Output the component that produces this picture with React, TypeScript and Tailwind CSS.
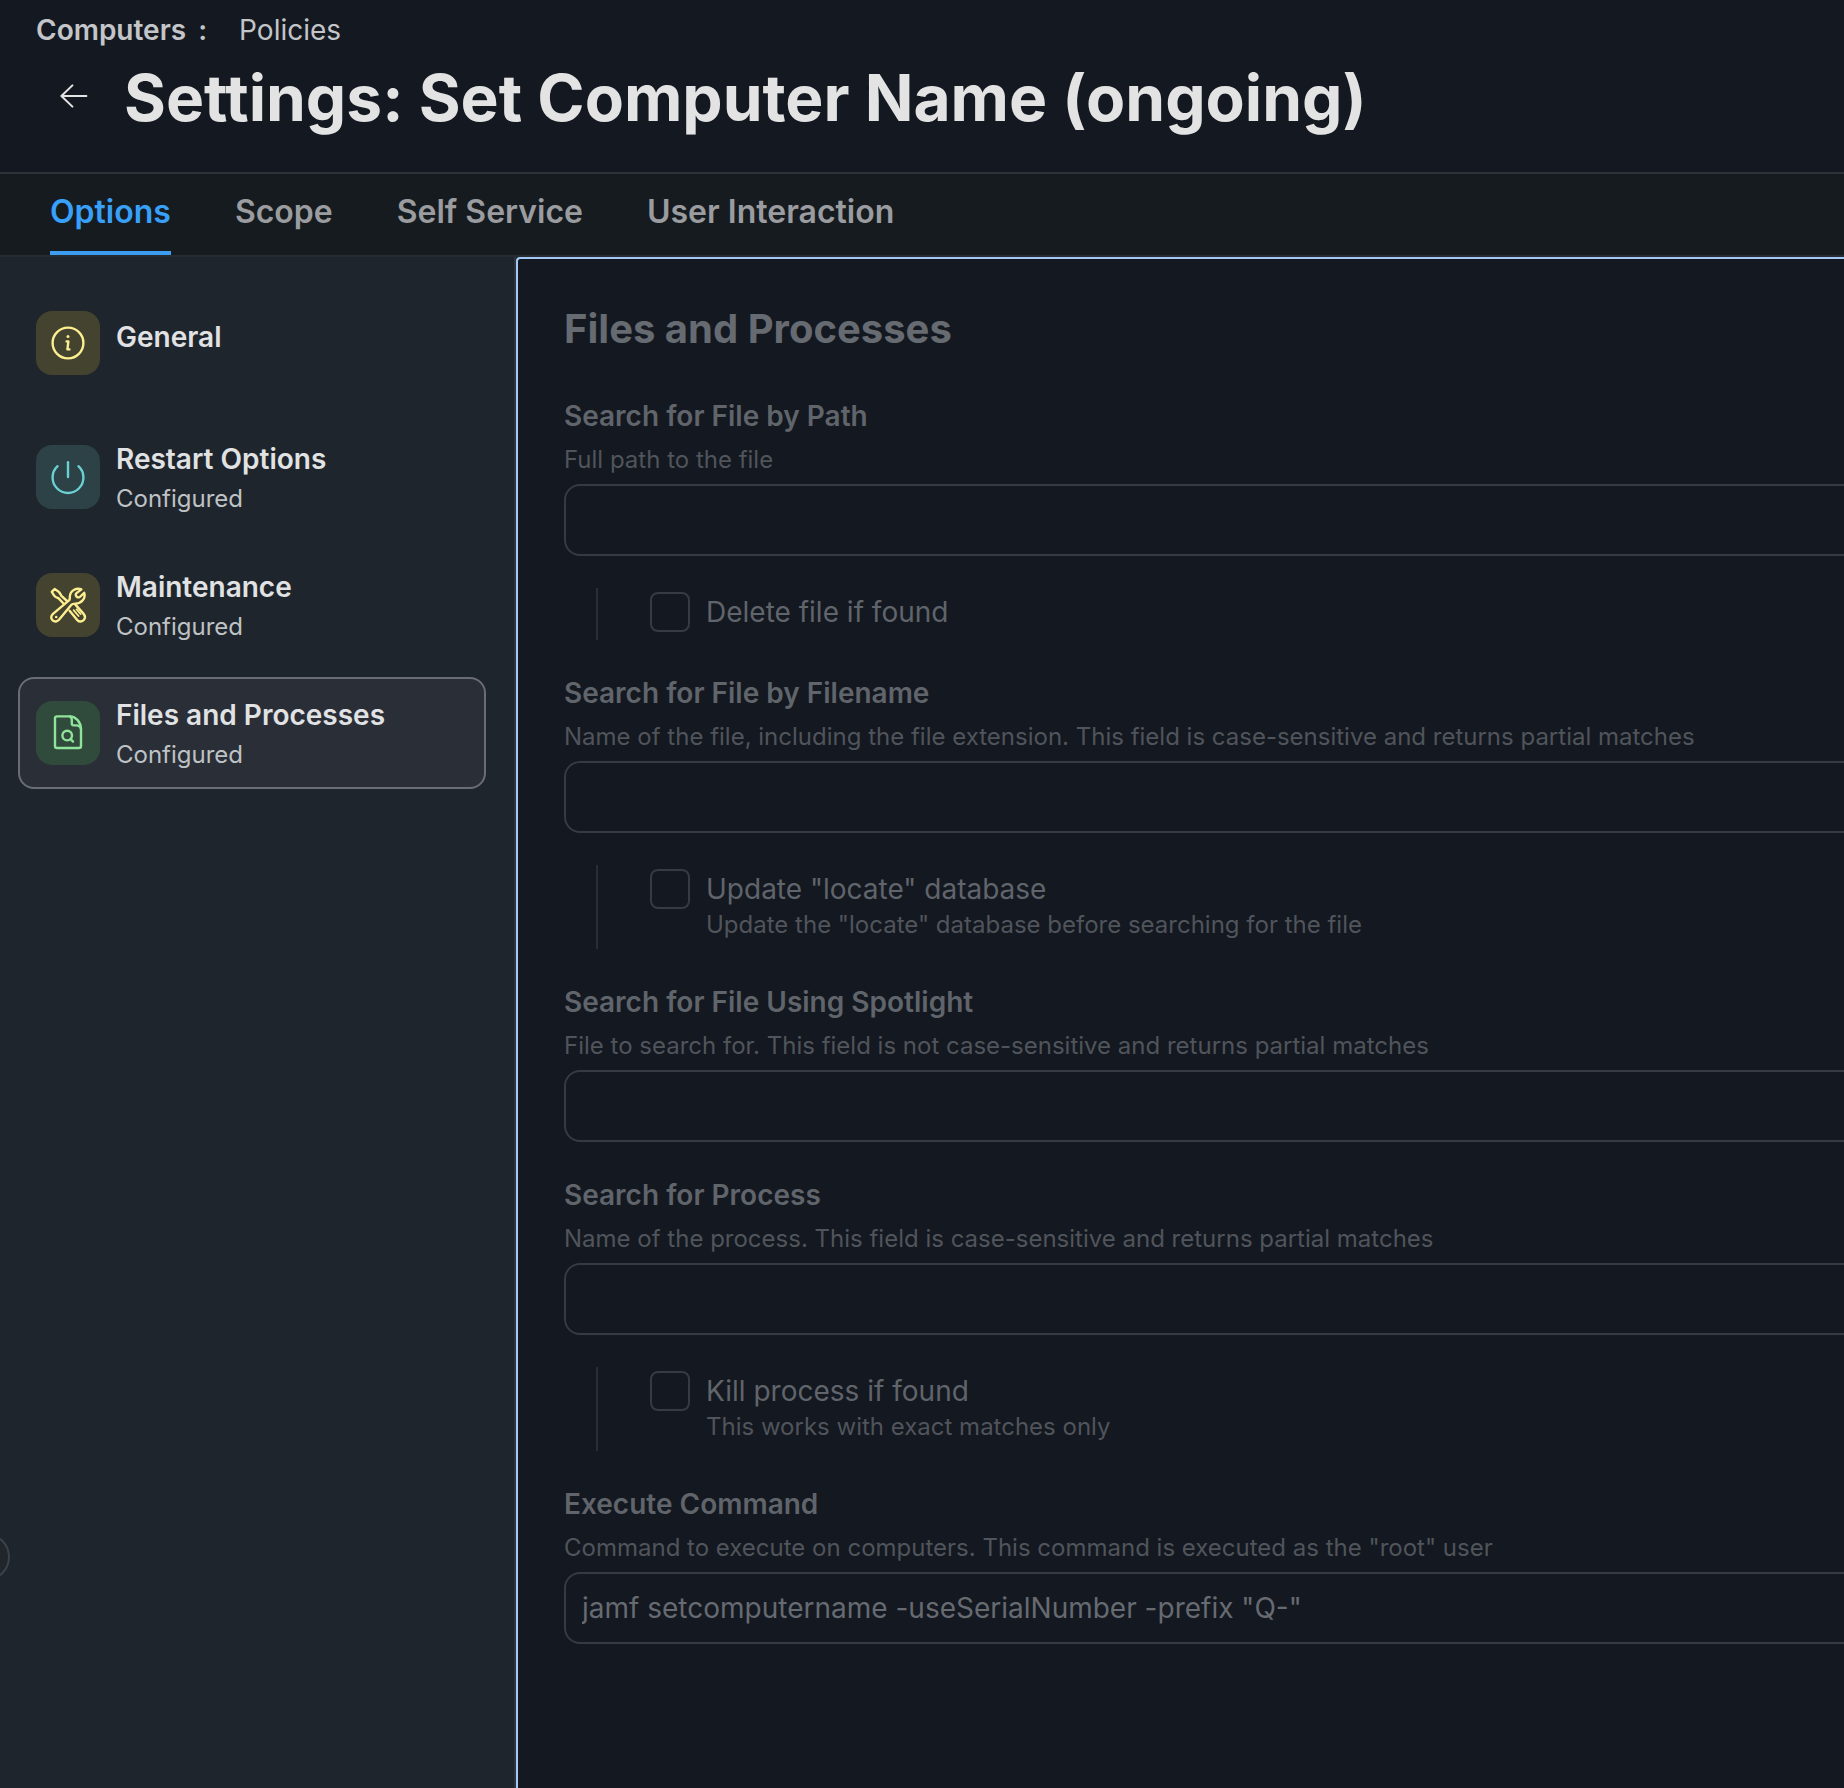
/**
 * Policy settings page
 * Options tab with the Files and Processes payload, read-only
 */

import { useState } from 'react';
import type { ReactNode } from 'react';

const tabs = ['Options', 'Scope', 'Self Service', 'User Interaction'];

function InfoIcon() {
  return (
    <svg viewBox="0 0 64 64" className="h-16 w-16" fill="none" stroke="currentColor" strokeWidth="2.4" strokeLinecap="round" strokeLinejoin="round" aria-hidden="true">
      <circle cx="32" cy="32" r="15.4" />
      <path d="M30.6 30.4 H32.4 L31.4 38.4 H33.4" />
      <circle cx="32" cy="25.6" r="1.5" fill="currentColor" stroke="none" />
    </svg>
  );
}

function PowerIcon() {
  return (
    <svg viewBox="0 0 64 64" className="h-16 w-16" fill="none" stroke="currentColor" strokeWidth="2.4" strokeLinecap="round" aria-hidden="true">
      <path d="M32 17.2 V32" />
      <path d="M21.6 21.2 A15.4 15.4 0 1 0 42.4 21.2" />
    </svg>
  );
}

function ToolsIcon() {
  return (
    <svg viewBox="0 0 64 64" className="h-16 w-16" fill="none" stroke="currentColor" strokeWidth="2.4" strokeLinecap="round" strokeLinejoin="round" aria-hidden="true">
      {/* wrench */}
      <path d="M45.4 16.4 C40.4 14.4 34 17.6 33.8 24 C33.8 25.6 34 26.4 33 27.4 L17 40.8 C14.6 43 14.8 45.8 16.6 47.4 C18.6 49.2 21.4 48.8 23.2 46.6 L35.4 31.8 C36.4 30.6 37.6 30.6 39.4 30.6 C45.4 30.6 50 25.4 48.2 19.8 L43.8 24 C41.4 25.2 38.8 22.8 40.2 20.4 Z" />
      <circle cx="20.2" cy="44" r="1.3" fill="currentColor" stroke="none" />
      {/* screwdriver */}
      <path d="M31 28 L25.2 22.6 C24.4 20.8 23.6 19.2 22 18.2 L18.6 16 L15.8 18.8 L18 22.4 C19 24 20.8 24.6 22.4 25.2 L28 31" />
      <path d="M39.4 31.6 L47.4 40.6 C49.6 43.2 49.2 45.6 47.6 47.2 C45.6 49 43 48.8 41 46.8 L33.6 37.8" />
      <path d="M37.6 37.2 L42.6 43 M40.6 36.4 L44.6 41" strokeWidth="1.8" />
    </svg>
  );
}

function FileSearchIcon() {
  return (
    <svg viewBox="0 0 64 64" className="h-16 w-16" fill="none" stroke="currentColor" strokeWidth="2.4" strokeLinecap="round" strokeLinejoin="round" aria-hidden="true">
      <path d="M34 15.4 H21 Q19 15.4 19 17.4 V45 Q19 47 21 47 H43 Q45 47 45 45 V28 C44.8 21 40 15.6 34 15.4 Z" />
      <path d="M34 15.4 Q35.8 16.4 35.8 18.8 V22.6 Q35.8 24.4 37.6 24.4 H40.4 C43.2 24.4 44.6 26 45 28" />
      <circle cx="31.2" cy="34.6" r="4.8" />
      <path d="M34.6 38 L37 40.6" />
    </svg>
  );
}

const payloads = [
  { name: 'General', icon: <InfoIcon />, color: 'bg-[#43432f] text-[#fdee90]' },
  { name: 'Restart Options', status: 'Configured', icon: <PowerIcon />, color: 'bg-[#2c4246] text-[#6bd0d1]' },
  { name: 'Maintenance', status: 'Configured', icon: <ToolsIcon />, color: 'bg-[#43432f] text-[#fdee90]' },
  { name: 'Files and Processes', status: 'Configured', icon: <FileSearchIcon />, color: 'bg-[#304b3b] text-[#8fe39b]' },
];

interface TextFieldProps {
  id: string;
  label: string;
  help: string;
  value?: string;
  children?: ReactNode;
}

function TextField({ id, label, help, value = '', children }: TextFieldProps) {
  return (
    <div>
      <label htmlFor={id} className="block text-[28px] leading-[42px] font-semibold text-[#60646b]">
        {label}
      </label>
      <p id={`${id}-help`} className="mb-px text-2xl leading-[46px] text-[#50545b]">
        {help}
      </p>
      <input
        id={id}
        type="text"
        readOnly
        value={value}
        aria-describedby={`${id}-help`}
        className="block h-[72px] w-full rounded-2xl border-2 border-[#363a42] bg-transparent px-4 text-[28px] text-[#666a71] outline-none"
      />
      {children}
    </div>
  );
}

function SubOption({ id, label, help }: { id: string; label: string; help?: string }) {
  return (
    <div className="mt-8 ml-8 flex gap-4 border-l-2 border-[#292d35] pt-1 pb-2 pl-[52px]">
      <input
        id={id}
        type="checkbox"
        className="h-10 w-10 shrink-0 appearance-none rounded-lg border-2 border-[#363a42]"
      />
      <div>
        <label htmlFor={id} className="block text-[28px] leading-10 text-[#60646b]">
          {label}
        </label>
        {help && <p className="text-2xl leading-8 text-[#50545b]">{help}</p>}
      </div>
    </div>
  );
}

export default function App() {
  const [activeTab, setActiveTab] = useState('Options');
  const [activePayload, setActivePayload] = useState('Files and Processes');

  return (
    <div className="relative flex min-h-screen flex-col overflow-hidden bg-[#141921] font-['Inter',sans-serif]">
      {/* Header */}
      <header className="border-b-2 border-[#2d3138] px-9 pt-2.5 pb-[26px]">
        <nav className="flex items-center text-[28px] leading-10 text-[#c3c5c8]">
          <a href="#computers" className="font-semibold">Computers</a>
          <span className="ml-3 font-semibold">:</span>
          <a href="#policies" className="ml-8">Policies</a>
        </nav>
        <div className="flex items-center">
          <button type="button" aria-label="Back" className="mb-1 ml-6 text-[#e4e4e4]">
            <svg viewBox="0 0 28 28" className="h-7 w-7" fill="none" stroke="currentColor" strokeWidth="2" strokeLinecap="round" strokeLinejoin="round" aria-hidden="true">
              <path d="M26.4 14 H1.4 M12.4 3.4 L1.4 14 L12.4 24.6" />
            </svg>
          </button>
          <h1 className="ml-9 text-[64px] leading-[96px] font-bold whitespace-nowrap text-[#e3e3e3]">
            Settings: Set Computer Name (ongoing)
          </h1>
        </div>
      </header>

      {/* Tabs */}
      <div role="tablist" className="flex gap-16 border-b-2 border-[#262b31] bg-[#161b20] px-[50px]">
        {tabs.map((tab) => (
          <button
            key={tab}
            type="button"
            role="tab"
            aria-selected={tab === activeTab}
            onClick={() => setActiveTab(tab)}
            className={`border-b-4 pb-px text-[32px] leading-[76px] font-semibold ${
              tab === activeTab ? 'border-[#3d9df0] text-[#38a0f8]' : 'border-transparent text-[#9a9c9f]'
            }`}
          >
            {tab}
          </button>
        ))}
      </div>

      <div className="flex flex-1">
        {/* Payload list */}
        <aside className="w-[516px] shrink-0 border-r-2 border-[#2f333c] bg-[#1f252c] pt-[30px] pr-7 pl-[18px]">
          <ul className="space-y-4">
            {payloads.map((payload) => (
              <li key={payload.name} className="first:mb-[22px]">
                <button
                  type="button"
                  onClick={() => setActivePayload(payload.name)}
                  className={`flex h-28 w-full items-center gap-4 rounded-2xl border-2 px-4 text-left ${
                    payload.name === activePayload ? 'border-[#6a6d73] bg-[#2a2e36]' : 'border-transparent'
                  }`}
                >
                  <span className={`h-16 w-16 shrink-0 rounded-2xl ${payload.color}`}>{payload.icon}</span>
                  <span className={payload.status ? 'pt-1' : 'pb-3'}>
                    <span className="block text-[28px] leading-10 font-semibold text-[#e1e2e4]">{payload.name}</span>
                    {payload.status && (
                      <span className="block text-2xl leading-10 text-[#bfc2c5]">{payload.status}</span>
                    )}
                  </span>
                </button>
              </li>
            ))}
          </ul>
        </aside>

        {/* Payload settings */}
        <main className="min-w-0 flex-1 overflow-hidden rounded-tl border-t-2 border-l-2 border-[#a3c8f5] bg-[#141820] pt-[43px] pb-16 pl-[46px]">
          <h2 className="mb-[39px] text-[40px] leading-[54px] font-bold text-[#666a71]">Files and Processes</h2>
          <form className="-mr-6 space-y-8">
            <TextField id="file-path" label="Search for File by Path" help="Full path to the file">
              <SubOption id="delete-file" label="Delete file if found" />
            </TextField>
            <TextField
              id="file-name"
              label="Search for File by Filename"
              help="Name of the file, including the file extension. This field is case-sensitive and returns partial matches"
            >
              <SubOption
                id="update-locate"
                label={'Update "locate" database'}
                help={'Update the "locate" database before searching for the file'}
              />
            </TextField>
            <TextField
              id="spotlight"
              label="Search for File Using Spotlight"
              help="File to search for. This field is not case-sensitive and returns partial matches"
            />
            <TextField
              id="process"
              label="Search for Process"
              help="Name of the process. This field is case-sensitive and returns partial matches"
            >
              <SubOption id="kill-process" label="Kill process if found" help="This works with exact matches only" />
            </TextField>
            <TextField
              id="command"
              label="Execute Command"
              help={'Command to execute on computers. This command is executed as the "root" user'}
              value={'jamf setcomputername -useSerialNumber -prefix "Q-"'}
            />
          </form>
        </main>
      </div>

      {/* Handle of the collapsed navigation */}
      <button
        type="button"
        aria-label="Expand navigation"
        className="absolute bottom-[207px] -left-[38px] h-12 w-12 rounded-full border-2 border-[#3d4148] bg-[#21262d]"
      />
    </div>
  );
}
